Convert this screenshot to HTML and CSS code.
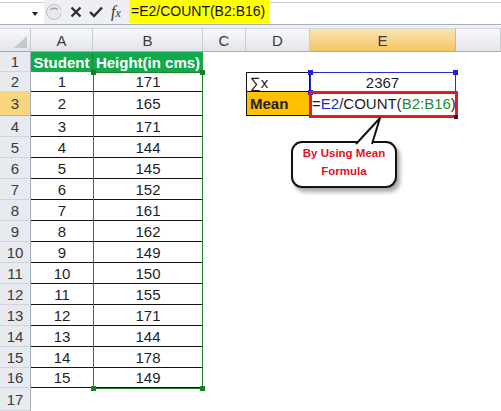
FILE: index.html
```html
<html>
    <head>
        <link rel="stylesheet" href="styles.css">
    </head>
    <body>
        <div class="page">
            <!-- formula bar -->
            <div class="fbar">
                <div class="namebox"><span class="dd"></span></div>
                <div class="tools">
                    <svg class="grip" width="16" height="20" viewBox="0 0 16 20">
                        <circle cx="9" cy="10" r="7.5" fill="#E8E9EB" stroke="#B9BDC2"/>
                        <path d="M5.5 7.5 Q9 5 12.5 7.5" fill="none" stroke="#9DA2A8" stroke-width="1.4"/>
                    </svg>
                    <svg class="ico-x" width="12" height="12" viewBox="0 0 12 12">
                        <path d="M1.5 1.5 L10.5 10.5 M10.5 1.5 L1.5 10.5" stroke="#2E2E2E" stroke-width="2.3"/>
                    </svg>
                    <svg class="ico-ok" width="14" height="12" viewBox="0 0 14 12">
                        <path d="M1 6 L5 10 L13 1.5" fill="none" stroke="#2E2E2E" stroke-width="2.4"/>
                    </svg>
                    <span class="fx">f<span class="fxx">x</span></span>
                </div>
                <div class="finput"><span class="ftext">=E2/COUNT(B2:B16)</span></div>
            </div>

            <div class="sheet">
                <div class="row colhdr">
                    <div class="ch corner">
                        <svg width="14" height="13" viewBox="0 0 14 13"><polygon points="13,0 13,12 0,12" fill="#C3C8CE"/></svg>
                    </div>
                    <div class="ch">A</div>
                    <div class="ch">B</div>
                    <div class="ch">C</div>
                    <div class="ch">D</div>
                    <div class="ch sel">E</div>
                    <div class="ch"></div>
                </div>
                <div class="row r20">
                    <div class="rh">1</div>
                    <div class="c hd sep">Student</div>
                    <div class="c hd">Height(in cms)</div>
                    <div class="c"></div><div class="c"></div><div class="c"></div><div class="c"></div>
                </div>
                <div class="row r20">
                    <div class="rh">2</div>
                    <div class="c t">1</div>
                    <div class="c t">171</div>
                    <div class="c"></div>
                    <div class="c lft d2">&sum;x</div>
                    <div class="c e2">2367</div>
                    <div class="c"></div>
                </div>
                <div class="row r24">
                    <div class="rh sel">3</div>
                    <div class="c t">2</div>
                    <div class="c t">165</div>
                    <div class="c"></div>
                    <div class="c lft d3">Mean</div>
                    <div class="c lft e3">=<span class="ref-b">E2</span>/COUNT(<span class="ref-g">B2:B16</span>)</div>
                    <div class="c"></div>
                </div>
                <div class="row"><div class="rh">4</div><div class="c t">3</div><div class="c t">171</div><div class="c"></div><div class="c"></div><div class="c"></div><div class="c"></div></div>
                <div class="row"><div class="rh">5</div><div class="c t">4</div><div class="c t">144</div><div class="c"></div><div class="c"></div><div class="c"></div><div class="c"></div></div>
                <div class="row"><div class="rh">6</div><div class="c t">5</div><div class="c t">145</div><div class="c"></div><div class="c"></div><div class="c"></div><div class="c"></div></div>
                <div class="row"><div class="rh">7</div><div class="c t">6</div><div class="c t">152</div><div class="c"></div><div class="c"></div><div class="c"></div><div class="c"></div></div>
                <div class="row"><div class="rh">8</div><div class="c t">7</div><div class="c t">161</div><div class="c"></div><div class="c"></div><div class="c"></div><div class="c"></div></div>
                <div class="row"><div class="rh">9</div><div class="c t">8</div><div class="c t">162</div><div class="c"></div><div class="c"></div><div class="c"></div><div class="c"></div></div>
                <div class="row"><div class="rh">10</div><div class="c t">9</div><div class="c t">149</div><div class="c"></div><div class="c"></div><div class="c"></div><div class="c"></div></div>
                <div class="row"><div class="rh">11</div><div class="c t">10</div><div class="c t">150</div><div class="c"></div><div class="c"></div><div class="c"></div><div class="c"></div></div>
                <div class="row"><div class="rh">12</div><div class="c t">11</div><div class="c t">155</div><div class="c"></div><div class="c"></div><div class="c"></div><div class="c"></div></div>
                <div class="row"><div class="rh">13</div><div class="c t">12</div><div class="c t">171</div><div class="c"></div><div class="c"></div><div class="c"></div><div class="c"></div></div>
                <div class="row"><div class="rh">14</div><div class="c t">13</div><div class="c t">144</div><div class="c"></div><div class="c"></div><div class="c"></div><div class="c"></div></div>
                <div class="row"><div class="rh">15</div><div class="c t">14</div><div class="c t">178</div><div class="c"></div><div class="c"></div><div class="c"></div><div class="c"></div></div>
                <div class="row r20"><div class="rh">16</div><div class="c t">15</div><div class="c t">149</div><div class="c"></div><div class="c"></div><div class="c"></div><div class="c"></div></div>
                <div class="row r23"><div class="rh">17</div><div class="c"></div><div class="c"></div><div class="c"></div><div class="c"></div><div class="c"></div><div class="c"></div></div>
            </div>

            <!-- range highlights drawn over the grid -->
            <div class="rng green-rng"></div>
            <div class="hdl green-h" style="left:91px;top:70px"></div>
            <div class="hdl green-h" style="left:200px;top:70px"></div>
            <div class="hdl green-h" style="left:91px;top:386px"></div>
            <div class="hdl green-h" style="left:200px;top:386px"></div>

            <div class="rng blue-rng"></div>
            <div class="hdl blue-h" style="left:308px;top:70px"></div>
            <div class="hdl blue-h" style="left:453px;top:70px"></div>
            <div class="hdl blue-h" style="left:308px;top:90px"></div>

            <div class="redbox"></div>
            <div class="fill-handle"></div>

            <!-- callout -->
            <div class="bubble">By Using Mean<br>Formula</div>
            <svg class="tail" width="34" height="30" viewBox="0 0 34 30">
                <path d="M4 28 L28 2 L20 28" fill="#fff" stroke="#111" stroke-width="2" stroke-linejoin="round"/>
            </svg>
        </div>
    </body>
</html>
```

FILE: styles.css
```css
body {
    margin: 0;
    font-family: "Liberation Sans", Arial, sans-serif;
    background: #fff;
    overflow: hidden;
}
.page {
    position: relative;
    width: 501px;
    height: 411px;
}

/* formula bar */
.fbar {
    display: flex;
    height: 25px;
    box-sizing: border-box;
    border-bottom: 1px solid #A9B0B9;
}
.namebox {
    width: 44px;
    display: flex;
    align-items: center;
    justify-content: flex-end;
    padding-right: 6px;
    box-sizing: border-box;
    border-top: 1px solid #C9CDD3;
    margin-top: 2px;
}
.dd {
    border-left: 3px solid transparent;
    border-right: 3px solid transparent;
    border-top: 4px solid #222;
}
.tools {
    width: 85px;
    display: flex;
    align-items: center;
    background: #EDEFF2;
}
.grip {
    margin-left: 1px;
}
.ico-x {
    margin-left: 9px;
}
.ico-ok {
    margin-left: 7px;
}
.fx {
    margin-left: 8px;
    font-family: "Liberation Serif", serif;
    font-style: italic;
    font-size: 16px;
    color: #333;
}
.fxx {
    font-size: 12px;
}
.finput {
    flex: 1;
    border-top: 1px solid #C9CDD3;
    margin-top: 2px;
    position: relative;
}
.ftext {
    position: absolute;
    left: 0;
    top: -3px;
    height: 23px;
    line-height: 23px;
    padding: 0 4px 0 2px;
    background: #FFFF00;
    font-size: 14px;
    color: #111;
}

/* sheet */
.sheet {
    padding-top: 3px;
    background: #EEF0F3;
}
.row {
    display: grid;
    grid-template-columns: 31px 62px 110px 43px 64px 146px 1fr;
    height: 21px;
    background: #fff;
}
.colhdr { height: 24px; }
.r20 { height: 20px; }
.r23 { height: 23px; }
.r24 { height: 24px; }

.ch {
    box-sizing: border-box;
    background: linear-gradient(#F7F8FA, #E2E5EA);
    border-right: 1px solid #C7CCD3;
    border-bottom: 1px solid #A3ACB8;
    border-top: 1px solid #D3D7DD;
    color: #3A3A3A;
    font-size: 15px;
    display: flex;
    align-items: center;
    justify-content: center;
}
.ch.sel {
    background: linear-gradient(#FAE4B3, #F4C664);
    border-right-color: #E4B45A;
    border-bottom-color: #E1A444;
}
.corner {
    align-items: flex-end;
    justify-content: flex-end;
    padding: 0 2px 2px 0;
}

.rh {
    box-sizing: border-box;
    background: #E7EAEE;
    border-right: 1px solid #A3ACB8;
    border-bottom: 1px solid #D0D5DB;
    color: #3A3A3A;
    font-size: 15px;
    display: flex;
    align-items: center;
    justify-content: center;
}
.rh.sel {
    background: #F8D57E;
    border-bottom-color: #E6AE4C;
}

.c {
    box-sizing: border-box;
    font-size: 15px;
    color: #1E1E1E;
    display: flex;
    align-items: center;
    justify-content: center;
    white-space: nowrap;
}
.t {
    border-bottom: 1px solid #111;
}
.hd {
    background: #10A94C;
    color: #fff;
    font-weight: bold;
}
.sep {
    border-right: 1px solid #1B8E3D;
}
.lft {
    justify-content: flex-start;
    padding-left: 3px;
}
.d2 {
    border: 1px solid #111;
}
.e2 {
    border-top: 1px solid #111;
    border-right: 1px solid #111;
    border-bottom: 1px solid #111;
}
.d3 {
    background: #FFC000;
    font-weight: bold;
    border-left: 1px solid #111;
    border-right: 1px solid #111;
    border-bottom: 1px solid #111;
}
.e3 {
    padding-left: 2px;
    border-bottom: 1px solid #111;
}
.ref-b { color: #2525D0; }
.ref-g { color: #1E8A2E; }

/* range highlights */
.rng {
    position: absolute;
    box-sizing: border-box;
}
.green-rng {
    left: 93px;
    top: 72px;
    width: 110px;
    height: 317px;
    border: 1px solid #23842B;
}
.blue-rng {
    left: 310px;
    top: 72px;
    width: 146px;
    height: 21px;
    border: 1px solid #2B2BD6;
}
.hdl {
    position: absolute;
    width: 5px;
    height: 5px;
}
.green-h { background: #1E7A26; }
.blue-h { background: #2222DD; }
.redbox {
    position: absolute;
    left: 309px;
    top: 91px;
    width: 149px;
    height: 27px;
    box-sizing: border-box;
    border: 3px solid #E11B22;
}
.fill-handle {
    position: absolute;
    left: 454px;
    top: 115px;
    width: 4px;
    height: 4px;
    background: #3A1A1A;
}

/* callout */
.bubble {
    position: absolute;
    left: 291px;
    top: 141px;
    width: 106px;
    height: 47px;
    box-sizing: border-box;
    border: 2px solid #111;
    border-radius: 11px;
    background: #fff;
    box-shadow: 3px 4px 4px rgba(0, 0, 0, 0.35);
    color: #E3101F;
    font-weight: bold;
    font-size: 11.5px;
    line-height: 18px;
    text-align: center;
    padding-top: 1px;
}
.tail {
    position: absolute;
    left: 352px;
    top: 116px;
}
```
